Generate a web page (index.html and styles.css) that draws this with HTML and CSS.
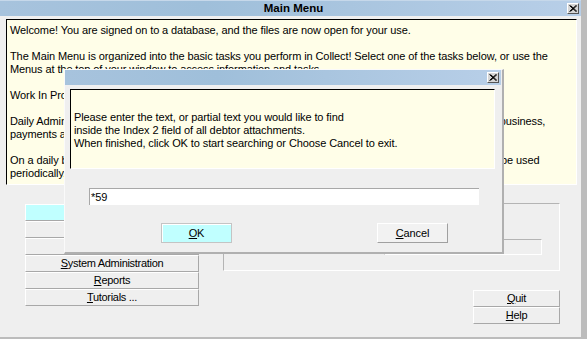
FILE: index.html
```html
<!DOCTYPE html>
<html>
<head>
<meta charset="utf-8">
<link rel="stylesheet" href="styles.css">
</head>
<body>
<div class="window">
  <div class="titlebar">
    <span class="title">Main Menu</span>
    <span class="close main-close"><svg width="8" height="7" viewBox="0 0 8 7"><path d="M0.5 0.5 L7 6.5 M1.5 0.5 L8 6.5 M7 0.5 L0.5 6.5 M8 0.5 L1.5 6.5" stroke="#000" stroke-width="1" fill="none"/></svg></span>
  </div>
  <div class="info">
    <p>Welcome! You are signed on to a database, and the files are now open for your use.</p>
    <p>The Main Menu is organized into the basic tasks you perform in Collect! Select one of the tasks below, or use the<br>Menus at the top of your window to access information and tasks.</p>
    <p>Work In Progress shows the accounts and tasks that you still have to complete today.</p>
    <p>Daily Administration includes the tasks you perform every day, such as working your accounts, loading business,<br>payments and reports.</p>
    <p>On a daily basis you will use the Daily Administration tasks. System Administration and Reports should be used<br>periodically.</p>
  </div>
  <div class="lower">
    <div class="menu">
      <button class="btn selected">Work</button>
      <button class="btn">Daily</button>
      <button class="btn">Search</button>
      <button class="btn"><u>S</u>ystem Administration</button>
      <button class="btn"><u>R</u>eports</button>
      <button class="btn"><u>T</u>utorials ...</button>
    </div>
    <div class="side">
      <div class="group"><div class="field"></div></div>
      <div class="actions">
        <button class="btn small"><u>Q</u>uit</button>
        <button class="btn small"><u>H</u>elp</button>
      </div>
    </div>
  </div>
  <div class="dialog">
    <div class="titlebar dlg-title">
      <span class="close dlg-close"><svg width="8" height="7" viewBox="0 0 8 7"><path d="M0.5 0.5 L7 6.5 M1.5 0.5 L8 6.5 M7 0.5 L0.5 6.5 M8 0.5 L1.5 6.5" stroke="#000" stroke-width="1" fill="none"/></svg></span>
    </div>
    <div class="prompt">Please enter the text, or partial text you would like to find<br>inside the Index 2 field of all debtor attachments.<br>When finished, click OK to start searching or Choose Cancel to exit.</div>
    <div class="entry">*59</div>
    <div class="dlg-buttons">
      <button class="dbtn ok"><u>O</u>K</button>
      <button class="dbtn"><u>C</u>ancel</button>
    </div>
  </div>
</div>
</body>
</html>
```
FILE: styles.css
```css
html, body {
  margin: 0;
  padding: 0;
  background: #efefef;
}
body {
  font-family: "Liberation Sans", Arial, sans-serif;
  font-size: 11px;
  letter-spacing: -0.1px;
  color: #000;
}
.window {
  position: relative;
  width: 581px;
  height: 337px;
  background: #efefef;
  border-right: 6px solid #bcbcbc;
  border-bottom: 2px solid #bcbcbc;
  overflow: hidden;
}
.titlebar {
  position: relative;
  height: 16px;
  background: linear-gradient(to right, #a7c3dd 0%, #9fbfda 35%, #a9c5df 60%, #b8cfe8 100%);
  border-top: 1px solid #c6d8ea;
  box-sizing: border-box;
  display: flex;
  align-items: center;
  justify-content: center;
}
.title {
  font-weight: bold;
  font-size: 11.5px;
  letter-spacing: 0;
  line-height: 15px;
  margin-left: 6px;
}
.close {
  position: absolute;
  width: 12px;
  height: 11px;
  box-sizing: border-box;
  background: #d6d6d6;
  border-top: 1px solid #fff;
  border-left: 1px solid #fff;
  border-right: 1px solid #555;
  border-bottom: 1px solid #555;
  display: flex;
  align-items: center;
  justify-content: center;
}
.close svg { display: block; }
.main-close { right: 2px; top: 2px; }
.info {
  margin: 3px 4px 0 6px;
  height: 166px;
  box-sizing: border-box;
  background: #fffee8;
  border-top: 1px solid #000;
  border-left: 1px solid #000;
  border-right: 1px solid #fff;
  border-bottom: 1px solid #fff;
  padding: 4px 0 0 3px;
  overflow: hidden;
  white-space: nowrap;
}
.info p {
  margin: 0 0 13px;
  line-height: 13px;
}
.lower {
  display: flex;
  gap: 24px;
  padding: 18px 21px 0 25px;
}
.menu {
  width: 174px;
  display: flex;
  flex-direction: column;
  margin-top: 1px;
}
.btn {
  font: inherit;
  letter-spacing: -0.3px;
  color: #000;
  height: 17px;
  padding: 0;
  line-height: 15px;
  background: #efefef;
  border-top: 1px solid #fff;
  border-left: 1px solid #fff;
  border-right: 1px solid #a8a8a8;
  border-bottom: 1px solid #a8a8a8;
  text-align: center;
  box-sizing: border-box;
}
.btn.selected { background: #c0ffff; }
.side {
  flex: 1;
  display: flex;
  flex-direction: column;
}
.group {
  height: 68px;
  box-sizing: border-box;
  border-top: 1px solid #b4b4b4;
  border-left: 1px solid #b4b4b4;
  border-right: 1px solid #fff;
  border-bottom: 1px solid #fff;
  padding: 35px 17px 0 160px;
}
.field {
  height: 16px;
  box-sizing: border-box;
  border-top: 1px solid #b4b4b4;
  border-left: 1px solid #b4b4b4;
  border-right: 1px solid #fff;
  border-bottom: 1px solid #fff;
}
.actions {
  align-self: flex-end;
  width: 87px;
  margin-top: 19px;
  display: flex;
  flex-direction: column;
}
.dialog {
  position: absolute;
  left: 64px;
  top: 69px;
  width: 440px;
  height: 185px;
  box-sizing: border-box;
  background: #efefef;
  border-top: 1px solid #fafafa;
  border-left: 1px solid #fafafa;
  border-right: 2px solid #b0b0b0;
  border-bottom: 2px solid #b0b0b0;
  padding-right: 1px;
}
.dlg-title {
  height: 15px;
  border-top: 0;
}
.dlg-close { right: 2px; top: 2px; }
.prompt {
  margin: 4px 6px 0 5px;
  height: 80px;
  box-sizing: border-box;
  background: #fffee8;
  border-top: 1px solid #000;
  border-left: 1px solid #000;
  border-right: 1px solid #fff;
  border-bottom: 1px solid #fff;
  padding: 21px 0 0 3px;
  line-height: 13px;
  white-space: nowrap;
}
.entry {
  margin: 19px 0 0 24px;
  width: 390px;
  height: 17px;
  box-sizing: border-box;
  background: #fff;
  border-top: 1px solid #a8a8a8;
  border-left: 1px solid #a8a8a8;
  padding: 1px 0 0 1px;
  line-height: 14px;
}
.dlg-buttons {
  display: flex;
  gap: 145px;
  margin: 18px 0 0 96px;
}
.dbtn {
  font: inherit;
  letter-spacing: inherit;
  color: #000;
  width: 71px;
  height: 20px;
  padding: 0;
  background: #f2f2f2;
  border-top: 1px solid #fff;
  border-left: 1px solid #fff;
  border-right: 1px solid #a0a0a0;
  border-bottom: 1px solid #a0a0a0;
  box-sizing: border-box;
}
.dbtn.ok {
  background: #c0ffff;
  border: 1px solid #c4c4c4;
  box-shadow: inset 1px 1px 0 #fff;
}
```
